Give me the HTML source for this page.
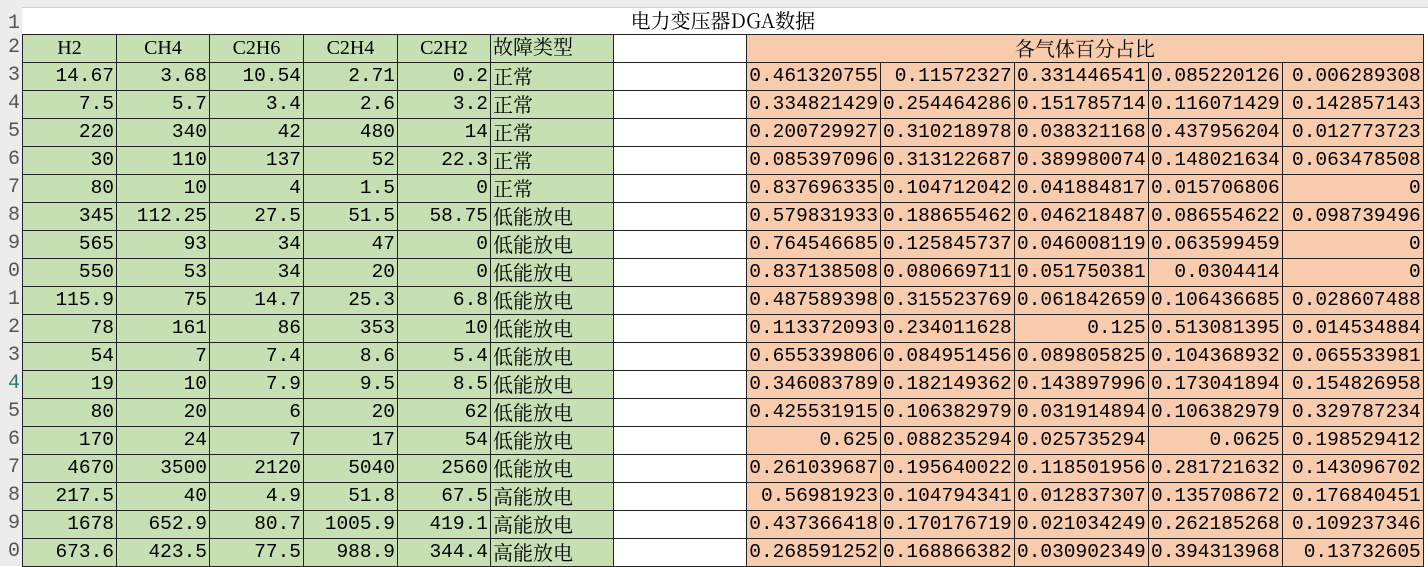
<!DOCTYPE html><html><head><meta charset="utf-8"><style>
body{margin:0;width:1428px;height:566px;overflow:hidden;background:#fff;font-family:"Liberation Mono","Noto Serif CJK SC",monospace;}
.hd{position:absolute;left:0;top:0;width:1428px;height:7px;background:#ececec;border-bottom:1px solid #d0d0d0}
.rn{position:absolute;left:0;width:22px;background:#ececec;color:#555;font-size:20px;text-align:right;overflow:hidden;box-sizing:border-box;padding-right:2px;line-height:28px;direction:rtl}
table{position:absolute;left:22px;top:6px;border-collapse:collapse;table-layout:fixed}
td{border:1px solid #222;height:27px;padding:0 2px;font-size:19.5px;line-height:27px;white-space:nowrap;overflow:hidden;text-align:right;box-sizing:border-box}
.g{background:#c6e0b4}.p{background:#f8cbad}
.c{text-align:center}.l{text-align:left;font-family:"Noto Serif CJK SC",serif;font-size:20px;line-height:24px}
.h td{font-family:"Liberation Serif","Noto Serif CJK SC",serif;font-size:20px}
</style></head><body>
<div class="hd"></div>
<table>
<colgroup><col style="width:94px"><col style="width:93px"><col style="width:94px"><col style="width:94px"><col style="width:93px"><col style="width:123px"><col style="width:133px"><col style="width:134px"><col style="width:133px"><col style="width:134px"><col style="width:134px"><col style="width:141px"></colgroup>
<tr><td colspan="12" class="c" style="height:28px;border:none;border-bottom:1px solid #222;font-family:'Noto Serif CJK SC',serif;font-size:20px;line-height:26px">电力变压器DGA数据</td></tr>
<tr class="g h"><td class="c">H2</td><td class="c">CH4</td><td class="c">C2H6</td><td class="c">C2H4</td><td class="c">C2H2</td><td class="l">故障类型</td><td style="background:#fff"></td><td colspan="5" class="p c" style="font-family:'Noto Serif CJK SC',serif;font-size:20px;line-height:24px">各气体百分占比</td></tr>
<tr><td class="g">14.67</td><td class="g">3.68</td><td class="g">10.54</td><td class="g">2.71</td><td class="g">0.2</td><td class="g l">正常</td><td></td><td class="p">0.461320755</td><td class="p">0.11572327</td><td class="p">0.331446541</td><td class="p">0.085220126</td><td class="p">0.006289308</td></tr>
<tr><td class="g">7.5</td><td class="g">5.7</td><td class="g">3.4</td><td class="g">2.6</td><td class="g">3.2</td><td class="g l">正常</td><td></td><td class="p">0.334821429</td><td class="p">0.254464286</td><td class="p">0.151785714</td><td class="p">0.116071429</td><td class="p">0.142857143</td></tr>
<tr><td class="g">220</td><td class="g">340</td><td class="g">42</td><td class="g">480</td><td class="g">14</td><td class="g l">正常</td><td></td><td class="p">0.200729927</td><td class="p">0.310218978</td><td class="p">0.038321168</td><td class="p">0.437956204</td><td class="p">0.012773723</td></tr>
<tr><td class="g">30</td><td class="g">110</td><td class="g">137</td><td class="g">52</td><td class="g">22.3</td><td class="g l">正常</td><td></td><td class="p">0.085397096</td><td class="p">0.313122687</td><td class="p">0.389980074</td><td class="p">0.148021634</td><td class="p">0.063478508</td></tr>
<tr><td class="g">80</td><td class="g">10</td><td class="g">4</td><td class="g">1.5</td><td class="g">0</td><td class="g l">正常</td><td></td><td class="p">0.837696335</td><td class="p">0.104712042</td><td class="p">0.041884817</td><td class="p">0.015706806</td><td class="p">0</td></tr>
<tr><td class="g">345</td><td class="g">112.25</td><td class="g">27.5</td><td class="g">51.5</td><td class="g">58.75</td><td class="g l">低能放电</td><td></td><td class="p">0.579831933</td><td class="p">0.188655462</td><td class="p">0.046218487</td><td class="p">0.086554622</td><td class="p">0.098739496</td></tr>
<tr><td class="g">565</td><td class="g">93</td><td class="g">34</td><td class="g">47</td><td class="g">0</td><td class="g l">低能放电</td><td></td><td class="p">0.764546685</td><td class="p">0.125845737</td><td class="p">0.046008119</td><td class="p">0.063599459</td><td class="p">0</td></tr>
<tr><td class="g">550</td><td class="g">53</td><td class="g">34</td><td class="g">20</td><td class="g">0</td><td class="g l">低能放电</td><td></td><td class="p">0.837138508</td><td class="p">0.080669711</td><td class="p">0.051750381</td><td class="p">0.0304414</td><td class="p">0</td></tr>
<tr><td class="g">115.9</td><td class="g">75</td><td class="g">14.7</td><td class="g">25.3</td><td class="g">6.8</td><td class="g l">低能放电</td><td></td><td class="p">0.487589398</td><td class="p">0.315523769</td><td class="p">0.061842659</td><td class="p">0.106436685</td><td class="p">0.028607488</td></tr>
<tr><td class="g">78</td><td class="g">161</td><td class="g">86</td><td class="g">353</td><td class="g">10</td><td class="g l">低能放电</td><td></td><td class="p">0.113372093</td><td class="p">0.234011628</td><td class="p">0.125</td><td class="p">0.513081395</td><td class="p">0.014534884</td></tr>
<tr><td class="g">54</td><td class="g">7</td><td class="g">7.4</td><td class="g">8.6</td><td class="g">5.4</td><td class="g l">低能放电</td><td></td><td class="p">0.655339806</td><td class="p">0.084951456</td><td class="p">0.089805825</td><td class="p">0.104368932</td><td class="p">0.065533981</td></tr>
<tr><td class="g">19</td><td class="g">10</td><td class="g">7.9</td><td class="g">9.5</td><td class="g">8.5</td><td class="g l">低能放电</td><td></td><td class="p">0.346083789</td><td class="p">0.182149362</td><td class="p">0.143897996</td><td class="p">0.173041894</td><td class="p">0.154826958</td></tr>
<tr><td class="g">80</td><td class="g">20</td><td class="g">6</td><td class="g">20</td><td class="g">62</td><td class="g l">低能放电</td><td></td><td class="p">0.425531915</td><td class="p">0.106382979</td><td class="p">0.031914894</td><td class="p">0.106382979</td><td class="p">0.329787234</td></tr>
<tr><td class="g">170</td><td class="g">24</td><td class="g">7</td><td class="g">17</td><td class="g">54</td><td class="g l">低能放电</td><td></td><td class="p">0.625</td><td class="p">0.088235294</td><td class="p">0.025735294</td><td class="p">0.0625</td><td class="p">0.198529412</td></tr>
<tr><td class="g">4670</td><td class="g">3500</td><td class="g">2120</td><td class="g">5040</td><td class="g">2560</td><td class="g l">低能放电</td><td></td><td class="p">0.261039687</td><td class="p">0.195640022</td><td class="p">0.118501956</td><td class="p">0.281721632</td><td class="p">0.143096702</td></tr>
<tr><td class="g">217.5</td><td class="g">40</td><td class="g">4.9</td><td class="g">51.8</td><td class="g">67.5</td><td class="g l">高能放电</td><td></td><td class="p">0.56981923</td><td class="p">0.104794341</td><td class="p">0.012837307</td><td class="p">0.135708672</td><td class="p">0.176840451</td></tr>
<tr><td class="g">1678</td><td class="g">652.9</td><td class="g">80.7</td><td class="g">1005.9</td><td class="g">419.1</td><td class="g l">高能放电</td><td></td><td class="p">0.437366418</td><td class="p">0.170176719</td><td class="p">0.021034249</td><td class="p">0.262185268</td><td class="p">0.109237346</td></tr>
<tr><td class="g">673.6</td><td class="g">423.5</td><td class="g">77.5</td><td class="g">988.9</td><td class="g">344.4</td><td class="g l">高能放电</td><td></td><td class="p">0.268591252</td><td class="p">0.168866382</td><td class="p">0.030902349</td><td class="p">0.394313968</td><td class="p">0.13732605</td></tr>
</table>
<div class="rn" style="top:7px;height:559px">
<div style="height:27px;line-height:34px">1</div><div>2</div><div>3</div><div>4</div><div>5</div><div>6</div><div>7</div><div>8</div><div>9</div><div>0</div><div>1</div><div>2</div><div>3</div><div style="color:#217a6a">4</div><div>5</div><div>6</div><div>7</div><div>8</div><div>9</div><div>0</div>
</div>
</body></html>
